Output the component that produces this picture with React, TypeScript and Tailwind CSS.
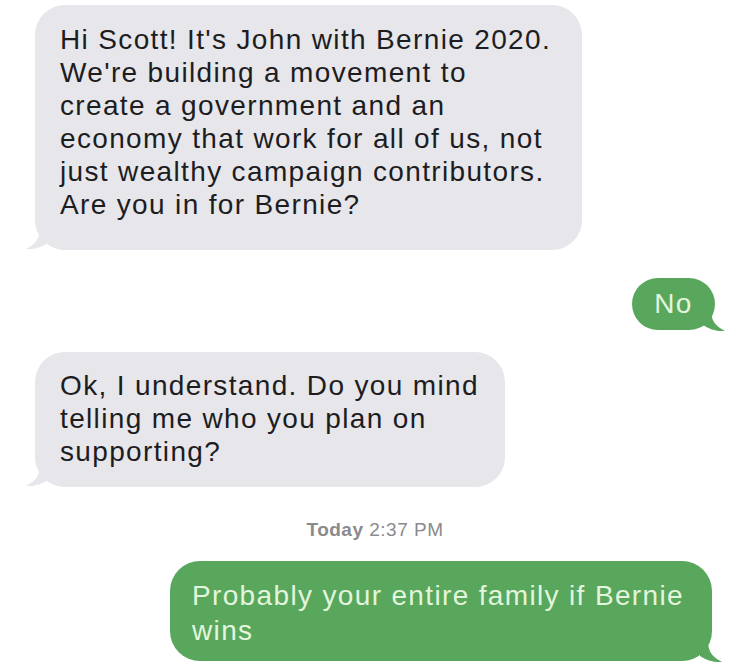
import React from "react";

const font = { fontFamily: '"Liberation Sans", Arial, sans-serif' };

function TailLeft() {
  return (
    <svg className="absolute bottom-0 left-[-9px]" width="22" height="22" viewBox="0 0 22 22">
      <path d="M22 0 H14 C14 10 10 16 0 21 C9 21.5 16 19 22 15 Z" fill="#e6e6eb" />
    </svg>
  );
}

function TailRight() {
  return (
    <svg className="absolute bottom-[-2px] right-[-10px]" width="22" height="22" viewBox="0 0 22 22">
      <path d="M0 0 H8 C8 10 12 16 22 21 C13 21.5 6 19 0 15 Z" fill="#58a75c" />
    </svg>
  );
}

export default function App() {
  return (
    <div className="w-[750px] h-[670px] bg-white overflow-hidden flex flex-col" style={font}>
      <div className="relative ml-[35px] mt-[5px] w-[547px] h-[245px] rounded-[30px] bg-[#e6e6eb] pl-[25px] pt-[18px] text-[28px] leading-[33px] text-[#1d1d1f] tracking-[1.35px] whitespace-nowrap">
        Hi Scott! It's John with Bernie 2020.
        <br />
        We're building a movement to
        <br />
        create a government and an
        <br />
        economy that work for all of us, not
        <br />
        just wealthy campaign contributors.
        <br />
        Are you in for Bernie?
        <TailLeft />
      </div>

      <div className="flex justify-end pr-[35px] mt-[28px]">
        <div className="relative w-[83px] h-[52px] rounded-[26px] bg-[#58a75c] flex items-center justify-center text-[28px] text-[#e3f5dc] tracking-[1.35px]">
          No
          <TailRight />
        </div>
      </div>

      <div className="relative ml-[35px] mt-[22px] w-[470px] h-[135px] rounded-[30px] bg-[#e6e6eb] pl-[25px] pt-[17px] text-[28px] leading-[33px] text-[#1d1d1f] tracking-[1.35px] whitespace-nowrap">
        Ok, I understand. Do you mind
        <br />
        telling me who you plan on
        <br />
        supporting?
        <TailLeft />
      </div>

      <div className="mt-[32px] text-center text-[19px] leading-[22px] text-[#8a8a8e] tracking-[0.5px]">
        <span className="font-bold">Today</span> 2:37 PM
      </div>

      <div className="flex justify-end pr-[38px] mt-[20px]">
        <div className="relative w-[542px] h-[100px] rounded-[30px] bg-[#58a75c] pl-[22px] pt-[17px] text-[28px] leading-[35px] text-[#e3f5dc] tracking-[1.35px] whitespace-nowrap">
          Probably your entire family if Bernie
          <br />
          wins
          <TailRight />
        </div>
      </div>
    </div>
  );
}
